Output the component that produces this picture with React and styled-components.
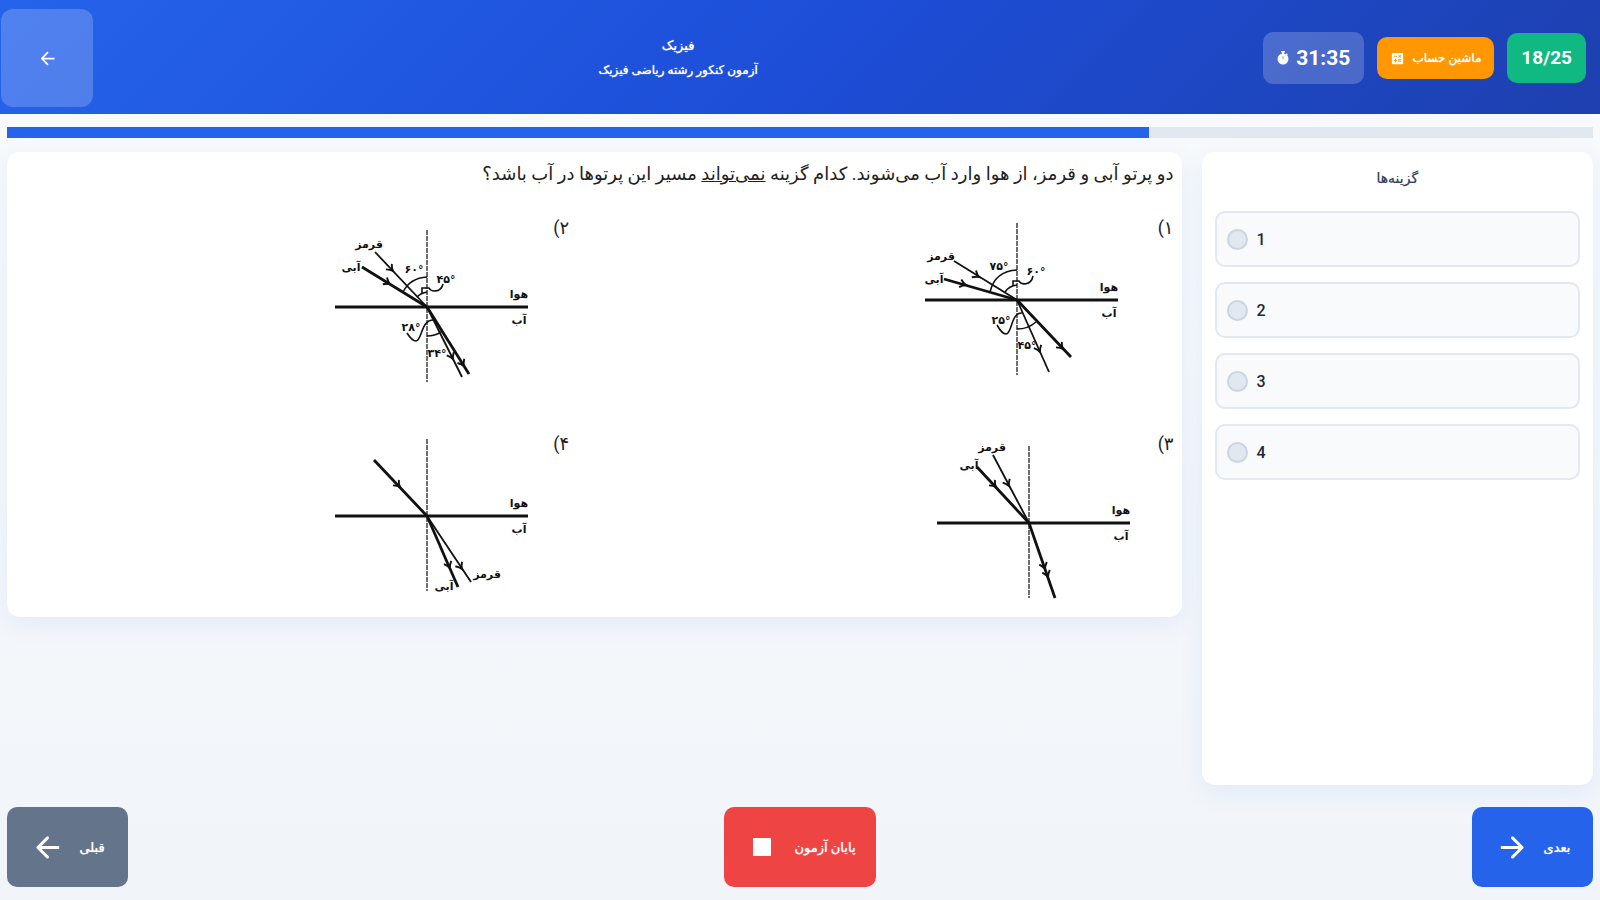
import React, { useState } from "react";
import styled, { createGlobalStyle } from "styled-components";
import { MdCalculate, MdStop } from "react-icons/md";

const GlobalStyle = createGlobalStyle`
  * {
    box-sizing: border-box;
  }
  body {
    margin: 0;
    font-family: Roboto, "DejaVu Sans", sans-serif;
    color: #334155;
  }
  button {
    font-family: inherit;
    border: none;
    cursor: pointer;
  }
`;

const Page = styled.div`
  min-height: 100vh;
  display: flex;
  flex-direction: column;
  background: linear-gradient(180deg, #f8fafc 0%, #f1f5f9 100%);
`;

const Header = styled.header`
  height: 114px;
  padding: 2px 14px 0 1px;
  display: flex;
  align-items: center;
  justify-content: space-between;
  color: #fff;
  background: linear-gradient(135deg, #2563eb 0%, #1d4ed8 50%, #1e40af 100%);
`;

const HeaderTools = styled.div`
  display: flex;
  align-items: center;
  gap: 13px;
`;

const Counter = styled.div`
  padding: 14px;
  border-radius: 10px;
  background: #10b981;
  font-size: 19px;
  line-height: 22px;
  font-weight: 700;
`;

const CalculatorButton = styled.button`
  height: 42px;
  padding: 0 13px;
  display: flex;
  align-items: center;
  gap: 7px;
  border-radius: 10px;
  background: #ff9800;
  color: #fff;
  font-size: 12px;
  text-shadow: 0 0 1px #fff;
`;

const Timer = styled.div`
  height: 52px;
  padding: 0 14px;
  display: flex;
  align-items: center;
  gap: 7px;
  border-radius: 10px;
  background: rgba(255, 255, 255, 0.2);
  font-size: 21px;
  font-weight: 700;
`;

const Titles = styled.div`
  text-align: center;
  text-shadow: 0 0 1px #fff;
  h1 {
    margin: 0;
    font-size: 13px;
    line-height: 24px;
    font-weight: 400;
  }
  p {
    margin: 0;
    font-size: 12px;
    line-height: 24px;
  }
`;

const BackButton = styled.button`
  width: 92px;
  height: 98px;
  display: flex;
  align-items: center;
  justify-content: center;
  border-radius: 12px;
  background: rgba(255, 255, 255, 0.2);
  color: #fff;
`;

const Progress = styled.div`
  height: 11px;
  margin: 13px 7px 14px;
  background: #e2e8f0;
`;

const ProgressFill = styled.div`
  height: 100%;
  background: #2563eb;
`;

const Main = styled.main`
  flex: 1;
  padding: 0 7px;
  display: grid;
  grid-template-columns: minmax(0, 1fr) minmax(0, 3fr);
  gap: 20px;
`;

const Card = styled.section`
  border-radius: 13px;
  background: #fff;
  box-shadow: 0 8px 24px rgba(37, 99, 235, 0.08);
`;

const OptionsCard = styled(Card)`
  padding: 14px 13px;
  h2 {
    margin: 0 0 21px;
    text-align: center;
    font-size: 14px;
    line-height: 24px;
    font-weight: 400;
    text-shadow: 0 0 1px #94a3b8;
  }
`;

const OptionList = styled.div`
  display: flex;
  flex-direction: column;
  gap: 15px;
  direction: ltr;
`;

const Option = styled.label`
  height: 56px;
  padding: 0 10px;
  display: flex;
  align-items: center;
  gap: 9px;
  border: 2px solid #e2e8f0;
  border-radius: 10px;
  background: #f8fafc;
  color: #1e293b;
  font-size: 16px;
  font-weight: 500;
  cursor: pointer;
  input {
    appearance: none;
    width: 21px;
    height: 21px;
    margin: 0;
    border: 2px solid #cbd5e1;
    border-radius: 50%;
    background: #e2e8f0;
  }
  input:checked {
    border-color: #2563eb;
    background: #2563eb;
  }
`;

const QuestionCard = styled(Card)`
  align-self: start;
  padding: 8px 8px 14px;
  color: #212121;
  font-size: 18px;
  line-height: 28px;
`;

const QuestionText = styled.p`
  margin: 0 0 28px;
`;

const Choices = styled.div`
  display: grid;
  grid-template-columns: 12fr 11fr;
  row-gap: 45px;
`;

const Choice = styled.figure`
  margin: 0;
  display: flex;
  align-items: flex-start;
  figcaption {
    width: 38px;
    line-height: 24px;
  }
  svg {
    flex: none;
    margin-top: ${(props) => props.$drop || 0}px;
    margin-right: ${(props) => props.$inset || 0}px;
  }
`;

const Label = styled.text`
  font-family: "DejaVu Sans", sans-serif;
  font-size: 11px;
  font-weight: 700;
  text-anchor: middle;
  fill: #111;
`;

const Footer = styled.footer`
  padding: 22px 7px 13px;
  display: flex;
  justify-content: space-between;
`;

const NavButton = styled.button`
  min-width: 121px;
  height: 80px;
  padding: 0 20px;
  display: flex;
  align-items: center;
  justify-content: center;
  gap: 14px;
  border-radius: 10px;
  background: ${(props) => props.$color};
  color: #fff;
  font-size: 13px;
  text-shadow: 0 0 1px #fff;
`;

const ArrowIcon = ({ size, right }) => (
  <svg width={size} height={size} viewBox="0 0 24 24" fill="currentColor">
    <path
      transform={right ? "matrix(-1 0 0 1 24 0)" : undefined}
      d="M19 11H7.83l4.88-4.88c.39-.39.39-1.02 0-1.41-.39-.39-1.02-.39-1.41 0l-6.59 6.59c-.39.39-.39 1.02 0 1.41l6.59 6.59c.39.39 1.02.39 1.41 0 .39-.39.39-1.02 0-1.41L7.83 13H20v-2z"
    />
  </svg>
);

const StopwatchIcon = () => (
  <svg width="12" height="14" viewBox="0 0 12 14" fill="#fff">
    <circle cx="6" cy="8" r="5.5" />
    <path d="M4 0h4v1.6H7V3H5V1.6H4zM9.6 2.2l1.3 1.3-1 1-1.3-1.3z" />
    <path d="M6 5v3.4" stroke="#8fa2e0" strokeWidth="1" />
  </svg>
);

// A light ray with an open arrow head at every point listed in heads
const Ray = ({ from = [0, 0], to = [0, 0], heads, thick }) => {
  const angle =
    (Math.atan2(to[1] - from[1], to[0] - from[0]) * 180) / Math.PI;
  return (
    <g stroke="#111" fill="none">
      <path
        d={`M${from.join(" ")}L${to.join(" ")}`}
        strokeWidth={thick ? 2.8 : 1.8}
      />
      {heads.map(([x, y]) => (
        <path
          key={x}
          transform={`translate(${x} ${y}) rotate(${angle})`}
          d="M-6 -4Q-3 -1 0 0Q-3 1 -6 4"
          strokeWidth="1.9"
        />
      ))}
    </g>
  );
};

const Diagram = ({ rays, arcs = [], labels }) => (
  <svg width="204" height="164" viewBox="-100 -84 204 164">
    <path d="M0 -77V75" stroke="#555" strokeWidth="1.7" strokeDasharray="5 1" />
    <path d="M-92 0H101" stroke="#111" strokeWidth="3" />
    {rays.map((ray, i) => (
      <Ray key={i} {...ray} />
    ))}
    {arcs.map((d) => (
      <path key={d} d={d} fill="none" stroke="#111" strokeWidth="1.6" />
    ))}
    <Label x="92" y="-9">
      هوا
    </Label>
    <Label x="92" y="17">
      آب
    </Label>
    {labels.map(([text, x, y]) => (
      <Label key={text} x={x} y={y}>
        {text}
      </Label>
    ))}
  </svg>
);

const choices = [
  {
    number: "۱",
    inset: 15,
    rays: [
      { from: [-63, -39], heads: [[-38, -23]] },
      { from: [-73, -21], heads: [[-51, -15]], thick: true },
      { to: [54, 57], heads: [[46, 49]], thick: true },
      { to: [32, 72], heads: [[23, 52]] },
    ],
    arcs: [
      "M0 -30Q-22 -29 -27 -8",
      "M0 -15Q-8 -14 -12 -8",
      "M-4 -14V-19H2C4 -15 14 -14 16 -24",
      "M0 29Q11 29 19 22",
      "M5 13C-6 12 -5 34 -11 34Q-15 34 -20 25",
    ],
    labels: [
      ["قرمز", -76, -40],
      ["آبی", -83, -17],
      ["۷۵°", -18, -30],
      ["۶۰°", 19, -25],
      ["۲۵°", -16, 24],
      ["۴۵°", 10, 49],
    ],
  },
  {
    number: "۲",
    drop: 7,
    rays: [
      { from: [-52, -55], heads: [[-34, -36]] },
      { from: [-65, -40], heads: [[-37, -23]], thick: true },
      { to: [42, 67], heads: [[37, 59]], thick: true },
      { to: [35, 70], heads: [[26, 52]] },
    ],
    arcs: [
      "M0 -30Q-17 -29 -24 -15",
      "M0 -15Q-6 -14 -10 -10",
      "M-5 -14V-19H2C4 -15 14 -14 16 -23",
      "M0 29Q8 29 14 25",
      "M7 13C-6 12 -5 34 -11 34Q-15 34 -20 26",
    ],
    labels: [
      ["قرمز", -58, -59],
      ["آبی", -76, -36],
      ["۶۰°", -13, -34],
      ["۴۵°", 19, -24],
      ["۲۸°", -16, 24],
      ["۳۴°", 10, 50],
    ],
  },
  {
    number: "۳",
    drop: 7,
    inset: 3,
    rays: [
      { from: [-36, -68], heads: [[-20, -37]] },
      { from: [-52, -56], heads: [[-33, -36]], thick: true },
      { to: [26, 75], heads: [[16, 46], [19, 54]], thick: true },
    ],
    labels: [
      ["قرمز", -37, -72],
      ["آبی", -60, -54],
    ],
  },
  {
    number: "۴",
    rays: [
      { from: [-53, -56], heads: [[-27, -29]], thick: true },
      { to: [31, 71], heads: [[23, 52]], thick: true },
      { to: [44, 66], heads: [[35, 53]] },
    ],
    labels: [
      ["قرمز", 60, 62],
      ["آبی", 17, 74],
    ],
  },
];

const ExamHeader = () => (
  <Header>
    <HeaderTools>
      <Counter>18/25</Counter>
      <CalculatorButton>
        ماشین حساب
        <MdCalculate size={15} />
      </CalculatorButton>
      <Timer>
        31:35
        <StopwatchIcon />
      </Timer>
    </HeaderTools>
    <Titles>
      <h1>فیزیک</h1>
      <p>آزمون کنکور رشته ریاضی فیزیک</p>
    </Titles>
    <BackButton aria-label="بازگشت">
      <ArrowIcon size={21} />
    </BackButton>
  </Header>
);

const App = () => {
  const [answer, setAnswer] = useState(null);
  const progress = 18 / 25;

  return (
    <Page dir="rtl" lang="fa">
      <GlobalStyle />
      <ExamHeader />
      <Progress dir="ltr">
        <ProgressFill style={{ width: `${progress * 100}%` }} />
      </Progress>
      <Main>
        <OptionsCard>
          <h2>گزینه‌ها</h2>
          <OptionList>
            {[1, 2, 3, 4].map((n) => (
              <Option key={n}>
                <input
                  type="radio"
                  name="answer"
                  checked={answer === n}
                  onChange={() => setAnswer(n)}
                />
                {n}
              </Option>
            ))}
          </OptionList>
        </OptionsCard>
        <QuestionCard>
          <QuestionText>
            دو پرتو آبی و قرمز، از هوا وارد آب می‌شوند. کدام گزینه{" "}
            <u>نمی‌تواند</u> مسیر این پرتوها در آب باشد؟
          </QuestionText>
          <Choices>
            {choices.map(({ number, drop, inset, ...diagram }) => (
              <Choice key={number} $drop={drop} $inset={inset}>
                <figcaption>{number})</figcaption>
                <Diagram {...diagram} />
              </Choice>
            ))}
          </Choices>
        </QuestionCard>
      </Main>
      <Footer>
        <NavButton $color="#2563eb">
          بعدی
          <ArrowIcon size={35} right />
        </NavButton>
        <NavButton $color="#ef4444">
          پایان آزمون
          <MdStop size={36} />
        </NavButton>
        <NavButton $color="#64748b">
          قبلی
          <ArrowIcon size={35} />
        </NavButton>
      </Footer>
    </Page>
  );
};

export default App;
